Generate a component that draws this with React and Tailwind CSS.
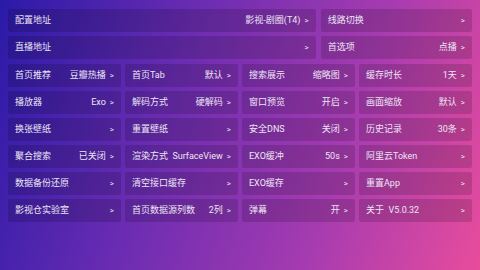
import React from 'react';

const top = [
    { label: '配置地址', value: '影视-剧圈(T4)', wide: true },
    { label: '线路切换', value: '' },
    { label: '直播地址', value: '', wide: true },
    { label: '首选项', value: '点播' },
];

const grid = [
    ['首页推荐', '豆瓣热播'], ['首页Tab', '默认'], ['搜索展示', '缩略图'], ['缓存时长', '1天'],
    ['播放器', 'Exo'], ['解码方式', '硬解码'], ['窗口预览', '开启'], ['画面缩放', '默认'],
    ['换张壁纸', ''], ['重置壁纸', ''], ['安全DNS', '关闭'], ['历史记录', '30条'],
    ['聚合搜索', '已关闭'], ['渲染方式', 'SurfaceView'], ['EXO缓冲', '50s'], ['阿里云Token', ''],
    ['数据备份还原', ''], ['清空接口缓存', ''], ['EXO缓存', ''], ['重置App', ''],
    ['影视仓实验室', ''], ['首页数据源列数', '2列'], ['弹幕', '开'], ['关于  V5.0.32', ''],
];

const Card = ({ label, value, className = '' }) => (
    <div className={`flex items-center justify-between h-[23px] px-[7px] rounded-[2px] bg-black/15 text-[#ece6f4] text-[9px] leading-none whitespace-pre ${className}`}>
        <span>{label}</span>
        <span className="flex items-center gap-[4px]">
            {value && <span>{value}</span>}
            <span className="text-[8px]">&gt;</span>
        </span>
    </div>
);

export default function App() {
    return (
        <div
            className="w-[480px] h-[270px] overflow-hidden bg-[linear-gradient(108deg,#2a1aa8_0%,#6a2cb2_35%,#a83cb0_70%,#e84c9c_100%)] px-[8px] pt-[9px]"
            style={{ fontFamily: 'Roboto, "Noto Sans CJK SC", sans-serif' }}
        >
            <div className="grid grid-cols-3 gap-x-[5px] gap-y-[4px]">
                {top.map((c, i) => (
                    <Card key={i} label={c.label} value={c.value} className={c.wide ? 'col-span-2' : ''} />
                ))}
            </div>
            <div className="grid grid-cols-4 gap-x-[4px] gap-y-[4px] mt-[5px]">
                {grid.map(([l, v], i) => (
                    <Card key={i} label={l} value={v} />
                ))}
            </div>
        </div>
    );
}
